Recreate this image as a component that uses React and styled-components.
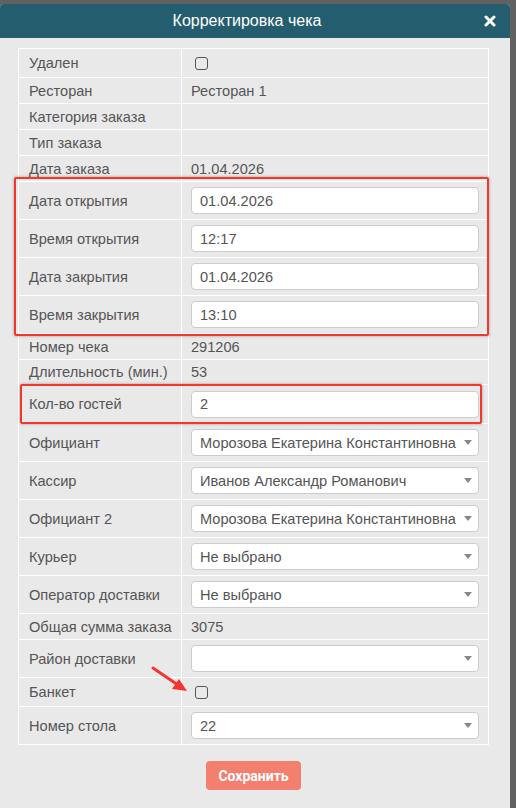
import React from 'react';
import styled, { createGlobalStyle } from 'styled-components';

const GlobalStyle = createGlobalStyle`
  html, body {
    margin: 0;
    padding: 0;
    background: #616161;
    font-family: "Liberation Sans", Arial, sans-serif;
    overflow: hidden;
  }
`;

const Page = styled.div`
  width: 516px;
  height: 808px;
  padding-top: 4px;
  box-sizing: border-box;
`;

const Modal = styled.div`
  position: relative;
  width: 510px;
  height: 804px;
  background: #e9e9e9;
  border-radius: 4px 4px 0 0;
  display: flex;
  flex-direction: column;
`;

const Header = styled.div`
  height: 34px;
  background: #245e6e;
  border-radius: 4px 4px 0 0;
  display: flex;
  align-items: center;
  padding: 0 14px 0 0;
  color: #fff;
`;

const Title = styled.div`
  flex: 1;
  text-align: center;
  font-size: 16px;
  padding-left: 10px;
`;

const Close = styled.button`
  border: 0;
  background: none;
  padding: 0;
  width: 12px;
  height: 12px;
  display: flex;
  cursor: pointer;
`;

const Body = styled.div`
  padding: 10px 21px 0 18px;
  display: flex;
  flex-direction: column;
  align-items: center;
`;

const Table = styled.table`
  width: 471px;
  table-layout: fixed;
  border-collapse: collapse;
  font-size: 14.6px;
  color: #555;
`;

const Row = styled.tr`
  height: ${({ $h }) => $h}px;
`;

const Label = styled.td`
  width: 163px;
  box-sizing: border-box;
  border: 1px solid #fff;
  padding: 0 4px 0 10px;
  white-space: nowrap;
  overflow: visible;
`;

const Value = styled.td`
  border: 1px solid #fff;
  padding: 0 9px;
`;

const Field = styled.div`
  height: 27px;
  box-sizing: border-box;
  border: 1px solid #ccc;
  border-radius: 4px;
  background: #fff;
  display: flex;
  align-items: center;
  padding: 0 6px 0 8px;
  color: #555;
`;

const FieldText = styled.span`
  flex: 1;
  min-width: 0;
  white-space: nowrap;
`;

const Caret = styled.span`
  width: 0;
  height: 0;
  margin-left: 3px;
  border-left: 4px solid transparent;
  border-right: 4px solid transparent;
  border-top: 5px solid #888;
  flex: none;
`;

const Check = styled.span`
  display: block;
  width: 13px;
  height: 13px;
  box-sizing: border-box;
  border: 1.5px solid #555;
  border-radius: 3px;
  margin-left: 4px;
`;

const SaveButton = styled.button`
  margin-top: 16px;
  height: 29px;
  padding: 0 12px;
  border: 0;
  border-radius: 4px;
  background: #f37f6f;
  color: #fff;
  font-family: Roboto, "Liberation Sans", sans-serif;
  font-size: 14px;
  font-weight: bold;
`;

const Mark = styled.div`
  position: absolute;
  left: ${({ $x }) => $x}px;
  top: ${({ $y }) => $y}px;
  width: ${({ $w }) => $w}px;
  height: ${({ $h }) => $h}px;
  box-sizing: border-box;
  border: 2px solid #f3362e;
  border-radius: 2px;
  box-shadow: 0 0 3px rgba(0, 0, 0, 0.35);
  pointer-events: none;
`;

const Arrow = styled.svg`
  position: absolute;
  left: 148px;
  top: 660px;
`;

const rows = [
  { label: 'Удален', type: 'check', h: 29 },
  { label: 'Ресторан', type: 'text', value: 'Ресторан 1', h: 26 },
  { label: 'Категория заказа', type: 'text', value: '', h: 26 },
  { label: 'Тип заказа', type: 'text', value: '', h: 26 },
  { label: 'Дата заказа', type: 'text', value: '01.04.2026', h: 26 },
  { label: 'Дата открытия', type: 'input', value: '01.04.2026', h: 38 },
  { label: 'Время открытия', type: 'input', value: '12:17', h: 38 },
  { label: 'Дата закрытия', type: 'input', value: '01.04.2026', h: 38 },
  { label: 'Время закрытия', type: 'input', value: '13:10', h: 38 },
  { label: 'Номер чека', type: 'text', value: '291206', h: 26 },
  { label: 'Длительность (мин.)', type: 'text', value: '53', h: 25 },
  { label: 'Кол-во гостей', type: 'input', value: '2', h: 39 },
  { label: 'Официант', type: 'select', value: 'Морозова Екатерина Константиновна', h: 38 },
  { label: 'Кассир', type: 'select', value: 'Иванов Александр Романович', h: 38 },
  { label: 'Официант 2', type: 'select', value: 'Морозова Екатерина Константиновна', h: 38 },
  { label: 'Курьер', type: 'select', value: 'Не выбрано', h: 38 },
  { label: 'Оператор доставки', type: 'select', value: 'Не выбрано', h: 38 },
  { label: 'Общая сумма заказа', type: 'text', value: '3075', h: 26 },
  { label: 'Район доставки', type: 'select', value: '', h: 38 },
  { label: 'Банкет', type: 'check', h: 29 },
  { label: 'Номер стола', type: 'select', value: '22', h: 38 },
];

function Cell({ row }) {
  if (row.type === 'check') return <Check />;
  if (row.type === 'input') {
    return (
      <Field>
        <FieldText>{row.value}</FieldText>
      </Field>
    );
  }
  if (row.type === 'select') {
    return (
      <Field>
        <FieldText>{row.value}</FieldText>
        <Caret />
      </Field>
    );
  }
  return row.value;
}

export default function App() {
  return (
    <>
      <GlobalStyle />
      <Page>
        <Modal>
          <Header>
            <Title>Корректировка чека</Title>
            <Close aria-label="Закрыть">
              <svg width="12" height="12" viewBox="0 0 12 12">
                <path d="M2 2 L10 10 M10 2 L2 10" stroke="#fff" strokeWidth="3" strokeLinecap="round" />
              </svg>
            </Close>
          </Header>

          <Body>
            <Table>
              <tbody>
                {rows.map((row) => (
                  <Row key={row.label} $h={row.h}>
                    <Label>{row.label}</Label>
                    <Value>
                      <Cell row={row} />
                    </Value>
                  </Row>
                ))}
              </tbody>
            </Table>
            <SaveButton>Сохранить</SaveButton>
          </Body>

          <Mark $x={14} $y={173} $w={475} $h={159} />
          <Mark $x={20} $y={380} $w={462} $h={40} />
          <Arrow width="44" height="32" viewBox="0 0 44 32">
            <line x1="5" y1="4" x2="30" y2="21" stroke="#f3362e" strokeWidth="3" strokeLinecap="round" />
            <polygon points="39,27 24,25 31,15" fill="#f3362e" />
          </Arrow>
        </Modal>
      </Page>
    </>
  );
}
